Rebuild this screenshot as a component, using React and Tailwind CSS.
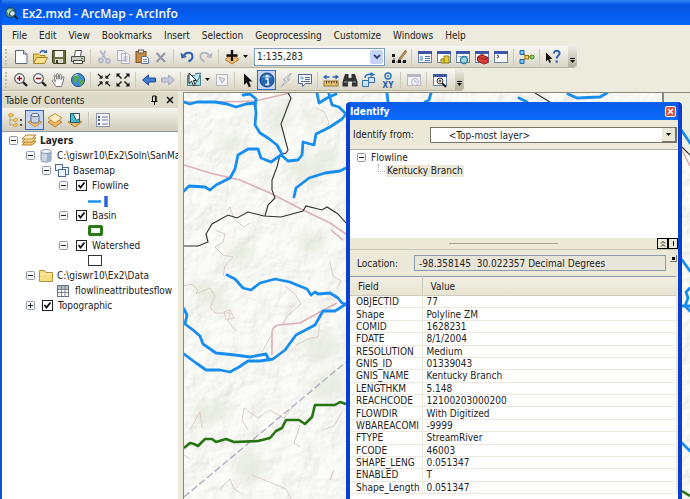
import React, { useState } from "react";

const FONT = "font-['DejaVu_Sans_Condensed','DejaVu_Sans',sans-serif]";

const menus = [
  "File",
  "Edit",
  "View",
  "Bookmarks",
  "Insert",
  "Selection",
  "Geoprocessing",
  "Customize",
  "Windows",
  "Help",
];

const attributes = [
  ["OBJECTID", "77"],
  ["Shape", "Polyline ZM"],
  ["COMID", "1628231"],
  ["FDATE", "8/1/2004"],
  ["RESOLUTION", "Medium"],
  ["GNIS_ID", "01339043"],
  ["GNIS_NAME", "Kentucky Branch"],
  ["LENGTHKM", "5.148"],
  ["REACHCODE", "12100203000200"],
  ["FLOWDIR", "With Digitized"],
  ["WBAREACOMI", "-9999"],
  ["FTYPE", "StreamRiver"],
  ["FCODE", "46003"],
  ["SHAPE_LENG", "0.051347"],
  ["ENABLED", "T"],
  ["Shape_Length", "0.051347"],
];

// small window frame shared by several toolbar icons
const Frame = ({ muted }) => (
  <>
    <rect x="1.5" y="2.5" width="13" height="11" fill={muted ? "#f1f1f6" : "#fff"} stroke={muted ? "#b5b5c6" : "#6a7fa8"} />
    <rect x="1" y="2" width="14" height="3" fill={muted ? "#b5b5c6" : "#3c55a5"} />
  </>
);

const Lens = ({ children }) => (
  <>
    <path d="M9.5 9.5l4.5 4.5" stroke="#222" strokeWidth="2.4" />
    <circle cx="6.5" cy="6.5" r="4.8" fill="#f6f8fb" stroke="#5a5a62" strokeWidth="1.2" />
    {children}
  </>
);

const icons = {
  new: (
    <>
      <path d="M2.5 1.5h8l3.500 3.500v9.500h-11.500z" fill="#fff" stroke="#5d6878" />
      <path d="M10.500 1.500v3.500h3.500" fill="#cfd6e0" stroke="#5d6878" />
    </>
  ),
  open: (
    <>
      <path d="M1.500 14v-9h5l1.500 1.500h5v3" fill="#f2cf63" stroke="#a5832a" />
      <path d="M1.500 14.500l3-6h11l-3 6z" fill="#fbe28a" stroke="#a5832a" />
      <path d="M8 4c1-2.500 3-3 5-1.500" fill="none" stroke="#2b5da8" strokeWidth="1.500" />
      <path d="M11.500 4h3.500v-3.500z" fill="#2b5da8" />
    </>
  ),
  save: (
    <>
      <path d="M1.500 1.500h13v13h-12l-1-1z" fill="#716f3c" stroke="#3f3e25" />
      <rect x="4" y="2" width="8" height="6" fill="#f3f3ec" />
      <rect x="4" y="10" width="8" height="4" fill="#d8d8cc" />
      <rect x="5" y="11" width="2" height="3" fill="#3f3e25" />
    </>
  ),
  print: (
    <>
      <path d="M4.500 7l1-5.500h6l-1 5.500" fill="#fff" stroke="#555" />
      <path d="M1.500 7.500h13v5h-13z" fill="#c9ccc0" stroke="#4b4d46" />
      <path d="M3.500 11.500h9v3h-9z" fill="#f5f5f0" stroke="#4b4d46" />
      <rect x="11" y="9" width="2" height="1" fill="#2d8f2d" />
    </>
  ),
  cut: (
    <g fill="none" stroke="#b3b7cb" strokeWidth="1.800">
      <path d="M4 1.500l6.500 9M9.500 1.500l-3 7" />
      <circle cx="5" cy="11.500" r="2" />
      <circle cx="12" cy="12" r="2" />
    </g>
  ),
  copy: (
    <g fill="#f2f2f7" stroke="#abaec4">
      <path d="M2.500 1.500h6l2 2v8h-8zM6.500 4.500h6l2 2v8h-8z" />
      <path d="M8.500 8h4M8.500 10h4M8.500 12h4" />
    </g>
  ),
  paste: (
    <>
      <rect x="2" y="2.500" width="10" height="11" fill="#c68b45" stroke="#7a5323" />
      <rect x="4.500" y="1" width="5" height="3" fill="#e8e3d0" stroke="#666" />
      <path d="M7.500 7.500h5l2 2v5h-7z" fill="#fff" stroke="#5873ab" />
      <path d="M9 10.500h4M9 12.500h4" stroke="#7b94c5" />
    </>
  ),
  del: <path d="M3.500 4l8.500 9M12 4l-8.500 9" stroke="#9295ad" strokeWidth="2" />,
  undo: (
    <>
      <path d="M5 7c1-4 8-4.500 8.500 0 .2 3-2 4.500-4 5.500" fill="none" stroke="#3264b4" strokeWidth="2" />
      <path d="M1.500 3.500l1 6 5.500-1.500z" fill="#3264b4" />
    </>
  ),
  redo: (
    <>
      <path d="M11 7c-1-4-8-4.500-8.500 0-.2 3 2 4.500 4 5.500" fill="none" stroke="#b4b8c4" strokeWidth="2" />
      <path d="M14.500 3.500l-1 6-5.500-1.500z" fill="#b4b8c4" />
    </>
  ),
  add: (
    <>
      <path d="M8 5l7 5.500-7 4.500-7-4.500z" fill="#f3bd78" stroke="#bd7733" />
      <path d="M8 1v11M2.500 6.500h11" stroke="#111" strokeWidth="2.400" />
    </>
  ),
  editor: (
    <>
      <path d="M14.500 1l-6 8-1.500 2.500 2.800-1.200 5.700-7.300z" fill="#c9985c" stroke="#7b5026" strokeWidth=".7" />
      <path d="M3 6v7h11" fill="none" stroke="#444" strokeDasharray="2 1" />
      <path d="M1 5h3v3h-3zM1 11h3v3h-3zM7 11h3v3h-3zM12 11h3v3h-3z" fill="#111" />
    </>
  ),
  toc: (
    <>
      <Frame />
      <path d="M3 7h3v5h-3z" fill="#9dbbe6" />
      <path d="M8 7.500h5M8 9.500h5M8 11.500h5" stroke="#4f79bb" />
    </>
  ),
  catalog: (
    <>
      <Frame />
      <path d="M5 14v-4h3v-3h5v7z" fill="#e5ce32" stroke="#8d7b1c" />
      <path d="M8 10v4" stroke="#8d7b1c" />
    </>
  ),
  search: (
    <>
      <Frame />
      <path d="M3 7.500h10" stroke="#9fb4c9" />
      <circle cx="9" cy="11" r="3.500" fill="#9fd8d8" stroke="#2b7da0" strokeWidth="1.400" />
    </>
  ),
  toolbox: (
    <>
      <Frame />
      <path d="M3.500 8l4-2.500 6.500 3v5l-4 1.500-6.500-3z" fill="#d8423b" stroke="#8c1e1a" />
      <path d="M3.500 8l6.500 2.500 4-2M7 7c1-2 3-1 4 1.500" fill="none" stroke="#8c1e1a" />
    </>
  ),
  python: (
    <>
      <Frame />
      <path d="M4 6l2 1.500-2 1.500" fill="none" stroke="#222" />
    </>
  ),
  model: (
    <>
      <path d="M3 3l4 5h6M3 13l4-5" fill="none" stroke="#9b8338" strokeWidth="1.300" />
      <path d="M1 1.500h4v4h-4zM1 10.500h4v4h-4z" fill="#7cc1ee" stroke="#1d6aa8" />
      <rect x="6" y="6.500" width="3.500" height="3.500" fill="#f5d05a" stroke="#a17a17" />
      <circle cx="13" cy="8" r="2" fill="#8bd06e" stroke="#3d8a28" />
    </>
  ),
  help: (
    <>
      <path d="M1 3.500v9l2-2 1.500 3.500 1.500-.7-1.500-3.300h3z" fill="#111" />
      <path d="M9 4.500c0-4 6-3.500 5.500 0-.3 2-2.800 2.500-2.800 5" fill="none" stroke="#2b63ae" strokeWidth="2" />
      <rect x="10.600" y="11.500" width="2.200" height="2.200" fill="#2b63ae" />
    </>
  ),
  zoomIn: (
    <Lens>
      <path d="M6.500 4v5M4 6.500h5" stroke="#8b1a1a" strokeWidth="1.500" />
    </Lens>
  ),
  zoomOut: (
    <Lens>
      <path d="M4 6.500h5" stroke="#8b1a1a" strokeWidth="1.500" />
    </Lens>
  ),
  pan: (
    <path
      d="M5 14.500l-3.500-5c-.8-1.300.8-2 1.700-1l1.300 1.300-1.500-5.600c-.2-1.400 1.300-1.600 1.700-.4l1.300 3.500-.4-4.600c0-1.400 1.500-1.400 1.700 0l.7 4.400.7-4c.3-1.200 1.600-1 1.600.2l-.2 4.300 1.300-2.500c.6-1 1.700-.5 1.500.5l-1.200 5.400-1.200 3.500z"
      fill="#fff"
      stroke="#77736d"
    />
  ),
  globe: (
    <>
      <circle cx="8" cy="8" r="6.500" fill="#3f8fd4" stroke="#234f86" />
      <path d="M4 4c2-2 5-1 5 1s-2 2-2 4-2 2-3 0-1.500-3.500 0-5zM10 8c2-1 3.500 0 3.500 1.500s-2 3.500-3 3.500-1.500-4-.5-5z" fill="#57a94c" />
      <path d="M4 4.500c1-1.500 3-2 4-1.500" stroke="#d5ecfb" fill="none" />
    </>
  ),
  fixedIn: (
    <g fill="#111" stroke="#111" strokeWidth="1.400">
      <path d="M2 2l4 4M14 2l-4 4M2 14l4-4M14 14l-4-4" />
      <path d="M6.500 3v3.500h-3.500zM9.500 3v3.500h3.500zM6.500 13v-3.500h-3.500zM9.500 13v-3.500h3.500z" strokeWidth="0" />
    </g>
  ),
  fixedOut: (
    <g fill="#111" stroke="#111" strokeWidth="1.400">
      <path d="M2.500 2.500l4 4M13.500 2.500l-4 4M2.500 13.500l4-4M13.500 13.500l-4-4" />
      <path d="M1.500 5.500v-4h4zM14.500 5.500v-4h-4zM1.500 10.500v4h4zM14.500 10.500v4h-4z" strokeWidth="0" />
    </g>
  ),
  back: <path d="M1.500 8l6-5v3h7v4h-7v3z" fill="#3f7fd2" stroke="#1c4f9c" />,
  forward: <path d="M14.500 8l-6-5v3h-7v4h7v3z" fill="#c3c8d8" stroke="#a6abc0" />,
  selectFeatures: (
    <>
      <path d="M1.500 3.500h13v10h-13z" fill="#9fe0dc" stroke="#4c7f87" />
      <path d="M9 2l5.500-1-1.500 5-4 6" fill="#bde8f4" stroke="#3b7284" />
      <path d="M3 1v10.500l2.500-2.300 2 4.500 1.800-.8-2-4.400h3.200z" fill="#fff" stroke="#222" />
    </>
  ),
  clear: (
    <>
      <rect x="2.500" y="2.500" width="11" height="11" fill="#f3f3f3" stroke="#b5b7c0" />
      <path d="M5 5l6 2-3 4z" fill="#ddd" stroke="#b5b7c0" />
    </>
  ),
  arrow: <path d="M4 1.500v11.500l2.700-2.600 2.200 4.800 2.100-1-2.200-4.600h3.700z" fill="#111" />,
  identify: (
    <>
      <circle cx="8" cy="8" r="7" fill="#2467b7" stroke="#173f7d" />
      <path d="M3 5c2-3.500 8-3.500 10 0-3 2-7 2-10 0z" fill="#5b9be0" />
      <circle cx="8.200" cy="4.200" r="1.300" fill="#fff" />
      <path d="M6.500 7h2.500v5.500M6.300 12.500h4" fill="none" stroke="#fff" strokeWidth="1.400" />
    </>
  ),
  hyperlink: <path d="M12.500 1.500l-7.500 6.500h3l-4.500 6.500 8.500-7.500h-3l4.500-5.500z" fill="#ececf0" stroke="#b0b0bb" />,
  popup: (
    <>
      <path d="M1.500 2.500h13v9h-6l-3 3v-3h-4z" fill="#fff" stroke="#4d6788" />
      <path d="M3.500 4.500h3v3h-3z" fill="#8fb4de" />
      <path d="M8 5.500h5M8 7.500h5M4 9.500h9" stroke="#466da6" />
    </>
  ),
  measure: (
    <>
      <rect x="1" y="9" width="14" height="5" fill="#e6bd73" stroke="#9d7636" />
      <path d="M3.500 9v2.500M6 9v2M8.500 9v2.500M11 9v2M13.500 9v2.500" stroke="#5b431c" />
      <path d="M0 5l3.500-2.500v1.700h3v1.600h-3v1.700zM16 5l-3.500-2.500v1.700h-3v1.600h3v1.700z" fill="#2d62ae" />
    </>
  ),
  find: (
    <>
      <path d="M3 2h3.500v4h3v-4h3.500l2.500 8v4.500h-5.500v-5h-4v5h-5.500v-4.500z" fill="#333" />
      <path d="M2 10h3.500M10.500 10h3.500" stroke="#aaa" />
    </>
  ),
  route: (
    <>
      <path d="M1.500 8.500h6v6h-6zM7.500 5.500h6v5h-6z" fill="#cfe3f5" stroke="#3571ab" />
      <path d="M4 6c0-3 3-4 6-3.500" fill="none" stroke="#2672ba" strokeWidth="1.500" />
      <path d="M9.500 0l4.500 2.500-4.500 2.500z" fill="#2672ba" />
    </>
  ),
  xy: (
    <>
      <circle cx="8" cy="4" r="3" fill="none" stroke="#2370b8" strokeWidth="1.400" />
      <circle cx="8" cy="4" r="1" fill="#2370b8" />
      <text x="8" y="15.500" textAnchor="middle" fontSize="8" fontWeight="bold" fill="#1c5da2" fontFamily="DejaVu Sans Condensed, sans-serif">
        XY
      </text>
    </>
  ),
  time: (
    <>
      <Frame muted />
      <circle cx="9" cy="10" r="3.500" fill="#f3f3f6" stroke="#b5b5c6" />
      <path d="M9 8v2h2" fill="none" stroke="#b5b5c6" />
    </>
  ),
  viewer: (
    <>
      <Frame />
      <path d="M10 11l4 4" stroke="#222" strokeWidth="2" />
      <circle cx="8" cy="9" r="3" fill="#fff" stroke="#333" />
      <path d="M8 7.500v3M6.500 9h3" stroke="#333" />
    </>
  ),
  tocOrder: (
    <>
      <path d="M3 4v9h5M3 8h5" fill="none" stroke="#b6a36b" />
      <path d="M1 3l3-2 3 2-3 2zM6 8l3-2 2 2-3 2zM6 13l3-2 2 2-3 2z" fill="#f6c95c" stroke="#c08c2c" strokeWidth=".7" />
      <path d="M13 7h2v2h-2zM13 12h2v2h-2z" fill="#555" />
    </>
  ),
  tocSource: (
    <>
      <path d="M1 10l7-3 7 3-7 5z" fill="#f5c878" stroke="#c68d3d" />
      <path d="M4 3v7c1 1.500 7 1.500 8 0v-7" fill="#c7d3e4" stroke="#5b6d88" />
      <ellipse cx="8" cy="3" rx="4" ry="1.600" fill="#f1f5fa" stroke="#5b6d88" />
    </>
  ),
  tocVisible: (
    <>
      <path d="M1 10l7-4 7 4-7 5z" fill="#f0b961" stroke="#ba7d2e" />
      <path d="M1 6l7-4.500 7 4.500-7 5z" fill="#fdebc4" stroke="#c68d3d" />
    </>
  ),
  tocSelection: (
    <>
      <path d="M1 10l7-4 7 4-7 5z" fill="#f0b961" stroke="#ba7d2e" />
      <path d="M3.500 1.500h9v9h-9z" fill="#3cc1d4" stroke="#245a68" />
      <path d="M6 1.500h6.500v5l-3 2z" fill="#fff" stroke="#245a68" />
    </>
  ),
  tocOptions: (
    <>
      <rect x="1.500" y="1.500" width="13" height="13" fill="#f6f7fb" stroke="#8b93ac" />
      <path d="M3 4h2v2h-2zM3 7h2v2h-2zM3 11h2v2h-2z" fill="#4e62a5" />
      <path d="M7 5h6M7 8h6M7 12h6" stroke="#6f7a9c" />
    </>
  ),
  layers: (
    <>
      <path d="M1 12l4-4h10l-4 4z" fill="#f5c365" stroke="#b98130" />
      <path d="M1 9l4-4h10l-4 4z" fill="#fbdc9b" stroke="#b98130" />
      <path d="M1 6l4-4h10l-4 4z" fill="#fdedc8" stroke="#b98130" />
    </>
  ),
  database: (
    <>
      <path d="M3 3.500v9c1 2 9 2 10 0v-9" fill="#c9d6e6" stroke="#8193ab" />
      <path d="M9 5v9c2 0 4-.5 4-1.500v-8z" fill="#9fb2ca" />
      <ellipse cx="8" cy="3.500" rx="5" ry="2" fill="#f2f6fb" stroke="#8193ab" />
    </>
  ),
  basemap: (
    <g fill="#eef4fb" stroke="#4a6d96">
      <rect x="1.500" y="1.500" width="7" height="6" />
      <rect x="8.500" y="4.500" width="6" height="7" />
      <rect x="4.500" y="6.500" width="7" height="7" />
    </g>
  ),
  folder: (
    <>
      <path d="M1.500 13.500v-11h5l1.500 2h6.500v9z" fill="#f6dc80" stroke="#b3923b" />
      <path d="M2 6h12" stroke="#fdf3c4" />
    </>
  ),
  table: (
    <>
      <rect x="2.500" y="2.500" width="11" height="11" fill="#fff" stroke="#67707f" />
      <rect x="3" y="3" width="10" height="3" fill="#b4bccb" />
      <path d="M3 6.500h10M3 9.500h10M6.500 3v10M10 3v10" stroke="#7b8493" />
    </>
  ),
};

const Icon = ({ name, className = "size-4" }) => (
  <svg viewBox="0 0 16 16" className={`shrink-0 ${className}`} aria-hidden="true">
    {icons[name]}
  </svg>
);

const Caret = () => (
  <svg viewBox="0 0 5 3" className="h-[3px] w-[5px] shrink-0" aria-hidden="true">
    <path d="M0 0h5l-2.500 3z" fill="#111" />
  </svg>
);

const ToolButton = ({ icon, caret, active }) => (
  <button
    aria-label={icon}
    className={`flex h-5 shrink-0 items-center justify-center gap-[3px] ${caret ? "w-7" : "w-[19px]"} ${
      active ? "border border-[#316ac5] bg-[#c7d6ee]" : ""
    }`}
  >
    <Icon name={icon} />
    {caret && <Caret />}
  </button>
);

const Separator = () => (
  <div className="mx-[3px] h-4 w-px shrink-0 bg-[#cbc8b7]" />
);

const Grip = () => (
  <div className="mr-1 ml-[3px] h-4 w-0.5 shrink-0 border-l-2 border-dotted border-[#c3c0ae]" />
);

const Overflow = () => (
  <button
    aria-label="Toolbar options"
    className="ml-1.5 flex h-full w-[9px] shrink-0 flex-col items-center justify-end gap-px rounded-r-sm bg-linear-to-b from-[#eeece1] to-[#b4b19d] pb-1"
  >
    <span className="h-px w-[5px] bg-black" />
    <Caret />
  </button>
);

const Toolbar = ({ label, children }) => (
  <div
    role="toolbar"
    aria-label={label}
    className="flex h-[22px] w-fit items-center rounded-r-sm border-b border-[#b9b6a2] bg-linear-to-b from-[#f8f7f1] to-[#d9d6c6]"
  >
    <Grip />
    {children}
    <Overflow />
  </div>
);

const Expander = ({ open, onClick }) => (
  <button aria-label={open ? "Collapse" : "Expand"} onClick={onClick} className="shrink-0">
    <svg viewBox="0 0 9 9" className="size-[9px]" aria-hidden="true">
      <rect x=".5" y=".5" width="8" height="8" rx="1" fill="#f7f7f5" stroke="#8e9aab" />
      <path d={open ? "M2 4.500h5" : "M2 4.500h5M4.500 2v5"} stroke="#222" />
    </svg>
  </button>
);

const CheckLayer = ({ name }) => {
  const [checked, setChecked] = useState(true);
  return (
    <label className="flex items-center gap-[5px]">
      <span className="grid size-[11px] place-items-center">
        <input
          type="checkbox"
          checked={checked}
          onChange={() => setChecked(!checked)}
          className="peer col-start-1 row-start-1 size-[11px] appearance-none border border-[#222] bg-white"
        />
        <svg viewBox="0 0 9 9" className="pointer-events-none invisible col-start-1 row-start-1 size-[9px] peer-checked:visible" aria-hidden="true">
          <path d="M1.500 4l2 2.500 4-5" fill="none" stroke="#111" strokeWidth="1.800" />
        </svg>
      </span>
      {name}
    </label>
  );
};

const Row = ({ className, children }) => (
  <li className={`flex h-[15px] items-center whitespace-nowrap ${className}`}>{children}</li>
);

const Contents = () => {
  const [showTopo, setShowTopo] = useState(false);
  return (
    <aside className="flex w-[181px] shrink-0 flex-col bg-[#ece9d8] pr-[5px]">
      <header className="flex h-4 items-center bg-[#dddac7] pr-1 pl-[3px]">
        <h2 className="flex-1">Table Of Contents</h2>
        <button aria-label="Auto hide" className="mr-2">
          <svg viewBox="0 0 8 10" className="h-2.5 w-2" aria-hidden="true">
            <path d="M2.500 6v-5h3.500v5M1 6.500h6.500M4.500 7v3" fill="none" stroke="#111" />
            <path d="M5 1h1.500v5h-1.500z" fill="#111" />
          </svg>
        </button>
        <button aria-label="Close">
          <svg viewBox="0 0 8 8" className="size-2" aria-hidden="true">
            <path d="M1 1l6 6M7 1l-6 6" stroke="#111" strokeWidth="1.500" />
          </svg>
        </button>
      </header>
      <div className="flex h-[23px] items-center gap-px bg-linear-to-b from-[#f6f5ee] to-[#cfccbb] pl-[3px]">
        <ToolButton icon="tocOrder" />
        <ToolButton icon="tocSource" active />
        <ToolButton icon="tocVisible" />
        <ToolButton icon="tocSelection" />
        <Separator />
        <ToolButton icon="tocOptions" />
      </div>
      <ul className="flex-1 overflow-hidden border-t border-[#8f9aa8] bg-white pt-px">
        <Row className="gap-[3px] pl-[7px]">
          <Expander open />
          <Icon name="layers" />
          <strong>Layers</strong>
        </Row>
        <Row className="gap-[3px] pl-6">
          <Expander open />
          <Icon name="database" />
          C:\giswr10\Ex2\Soln\SanMa
        </Row>
        <Row className="gap-[3px] pl-10">
          <Expander open />
          <Icon name="basemap" />
          Basemap
        </Row>
        <Row className="gap-2 pl-[57px]">
          <Expander open />
          <CheckLayer name="Flowline" />
        </Row>
        <Row className="pl-[86px]">
          <svg viewBox="0 0 20 12" className="h-3 w-5" aria-hidden="true">
            <path d="M0 6.500h13" stroke="#1e90ef" strokeWidth="2.500" />
            <path d="M18 1v11" stroke="#2f62dc" strokeWidth="3.500" />
          </svg>
        </Row>
        <Row className="gap-2 pl-[57px]">
          <Expander open />
          <CheckLayer name="Basin" />
        </Row>
        <Row className="pl-[86px]">
          <div className="h-[11px] w-[15px] rounded-xs border-3 border-[#2a7a12]" />
        </Row>
        <Row className="gap-2 pl-[57px]">
          <Expander open />
          <CheckLayer name="Watershed" />
        </Row>
        <Row className="pl-[86px]">
          <div className="h-[11px] w-[14px] border border-[#333]" />
        </Row>
        <Row className="gap-[3px] pl-6">
          <Expander open />
          <Icon name="folder" />
          C:\giswr10\Ex2\Data
        </Row>
        <Row className="gap-1 pl-[53px]">
          <Icon name="table" />
          flowlineattributesflow
        </Row>
        <Row className="gap-[7px] pl-6">
          <Expander open={showTopo} onClick={() => setShowTopo(!showTopo)} />
          <CheckLayer name="Topographic" />
        </Row>
      </ul>
    </aside>
  );
};

const MapView = () => (
  <svg viewBox="184 93 506 406" preserveAspectRatio="xMinYMin slice" className="size-full" role="img" aria-label="Map">
    <defs>
      <filter id="relief" x="0" y="0" width="100%" height="100%">
        <feTurbulence type="fractalNoise" baseFrequency="0.045" numOctaves="4" seed="11" />
        <feDiffuseLighting surfaceScale="2.600" diffuseConstant="1.080" lightingColor="#fdfdf9">
          <feDistantLight azimuth="225" elevation="62" />
        </feDiffuseLighting>
      </filter>
      <filter id="soft">
        <feGaussianBlur stdDeviation="5" />
      </filter>
    </defs>
    <rect x="184" y="93" width="506" height="406" fill="#f8f8f4" />
    <rect x="184" y="93" width="506" height="406" filter="url(#relief)" opacity=".55" />
    <rect x="663" y="93" width="27" height="60" fill="#e6ecdc" opacity=".7" />
    <g fill="#dfe5d4" opacity=".6" filter="url(#soft)">
      <path d="M270 112l12-14 6 20-6 20-14-6zM285 165l30-8 15-12 10 20-40 18zM215 140l18-6 12 12-18 8zM300 105l20 10-8 18z" />
      <path d="M225 250l20-10 10 15-20 12zM300 230l25 8-6 16-20-6zM190 280l25 6 20 30-30-8zM300 340l30-10 14 20-30 14z" />
      <path d="M190 410l30-12 12 15-30 14zM230 460l25-10 14 20-24 15zM310 380l30-14 6 25-30 10z" />
    </g>
    <g fill="none" stroke="#dccfc6">
      <path d="M316 108l8 4 5 10-3 8M226 212l4-5 4 12 10 8 6-4M215 230l10 4-2 8-8 5 8 8 10 2-8 9-2 10M184 286l8-2 6 6-2 4 14-6 5 8-5 12 6 5 14 0-2 8 8 10M224 312l6-2 4 8-8 2z" />
      <path d="M330 262l3 14 8 5-4 8M285 286l10 8 6 10-14 12-4 8M262 352l10-18M296 345l12-6 10-2 2-14" />
      <path d="M190 430l10-18 2 16M248 430l-6-10 2-12 14 10 12-8 14 8 8-10M300 425l-6 18 6 4M322 430l12-4 8-14M184 455l6 4M220 489l10-10 4 10 10 6M252 475l20 8 14 6 5 10M330 480l4-10-4 10" />
    </g>
    <g fill="none" stroke="#dcb0b3" strokeWidth="1.600">
      <path d="M184 165l26 8 30 7 30 13 33 17 27 13 16 11M184 102q40 0 71-1l35-8M337 303l-17 9-20 11-22 2q-6 2-6 8v22M331 230l12 10" />
      <path d="M682 150l8 16" />
    </g>
    <path d="M184 497l162-135" fill="none" stroke="#b9b0c6" strokeWidth="1.500" strokeDasharray="7 3" />
    <g fill="none" stroke="#2f2f2f" strokeWidth="1.100">
      <path d="M288 93l3 5-10 26 7 26-2 3-6 2-3 12-5 13v10l3 8-7 7-3 11" />
      <path d="M184 246l14 0 10-4-2-8 6-10 16-9 9 3 11-6 16 4 17 1 22-6 3-5 16 4 5-3 11 7 8 9" />
      <path d="M535 93l15 9M663 93v9M682 147l8 8" />
    </g>
    <g fill="none" stroke="#178df0" strokeWidth="2.800" strokeLinejoin="round" strokeLinecap="round">
      <path d="M184 102l6 2 7-2h18l12 2 9 3 10-3 9-1 1 10-1 12 5 8 8 5 9 7 5 9" />
      <path d="M243 95l7-1 6 5-1 7" />
      <path d="M184 191l5-5 16 1 5 3 6-5 14-7 5-9 3-14 10-6 10 0 3 9 10 4 10-7 7 6 10-1 4-5 1-13 11 3 2-11 14-7 12-8 4-5-7-7-7-2-3-11M317 93l2 10 8-5 9-4" />
      <path d="M294 197l2-9 13-10 16-5 15-2 6-3" />
      <path d="M227 275l8 4 8 9 8 2 9-7 15-4 15 3 7 3 10 4 4 6 4-3 3 2 12-1 8 5 4 5 7 2" />
      <path d="M346 304l-11 7h-12l-8 14-19 10-11 15-12 9-13 2h-12l-9 6-9 5-10-2-14 0-10-7-12-9" />
      <path d="M184 309l3 6-2 9 8 6 7 6 3 8 13 9 19 2 15 2 16-3 3 6" />
      <path d="M387 93l1 9M431 93l-2 7-4 2M519 98l8 4M568 94l9 4 23-1 7-4" />
      <path d="M682 131l8 12M682 260l8 11M690 288l-4 4 2 6-3 8 5 5M682 306h8M682 443l8 8" />
    </g>
    <g fill="none" stroke="#277512" strokeWidth="2.600" strokeLinejoin="round">
      <path d="M184 448l6-5 4 1 4 2 7-7 7 0 4 3 10-3 8 3 24-1 12-3 6-7 6-3 4-8 13 0 6 4 7-7 3-12 20 0 5-3 6 2M682 491l8 5" />
    </g>
  </svg>
);

const Identify = () => (
  <section
    aria-label="Identify"
    className="absolute top-[9px] bottom-0 left-[162px] flex w-[336px] flex-col overflow-hidden rounded-t-sm border-x-4 border-[#0a3fd4] bg-[#ece9d8]"
  >
    <header className="flex h-[18px] shrink-0 items-center justify-between bg-linear-to-b from-[#0a5be8] to-[#0a6cfb] text-white">
      <h2 className="font-bold">Identify</h2>
      <button aria-label="Close" className="mr-0.5 rounded-xs border border-white bg-[#dd4f35] p-px">
        <svg viewBox="0 0 7 7" className="size-[7px]" aria-hidden="true">
          <path d="M1 1l5 5M6 1l-5 5" stroke="#fff" strokeWidth="1.500" />
        </svg>
      </button>
    </header>
    <div className="flex h-[30px] shrink-0 items-center gap-4 border-b border-[#b5b2a0] pr-px pl-[3px]">
      <label htmlFor="layer">Identify from:</label>
      <div className="relative h-4 flex-1">
        <select id="layer" className="block h-4 w-full appearance-none border border-[#77756a] bg-white pl-[18px]">
          <option>&lt;Top-most layer&gt;</option>
        </select>
        <span className="pointer-events-none absolute top-px right-px flex h-3.5 w-3.5 items-center justify-center border-r border-b border-[#77756a] bg-[#ece9d8]">
          <Caret />
        </span>
      </div>
    </div>
    <ul className="h-[88px] shrink-0 bg-white">
      <li>
        <div className="flex h-3.5 items-center gap-[5px] pl-[7px]">
          <Expander open />
          Flowline
        </div>
        <ul>
          <li className="flex h-3.5 items-center pl-7">
            <span className="mr-px h-2 w-[7px] self-start border-b border-l border-dotted border-[#aaa]" />
            <span className="bg-[#ece9d8] px-px leading-3">Kentucky Branch</span>
          </li>
        </ul>
      </li>
    </ul>
    <div className="flex h-3 shrink-0 items-center border-b border-[#c9c6b5]">
      <div className="flex flex-1 justify-center">
        <div className="h-px w-[109px] bg-[#a3a193]" />
      </div>
      <button aria-label="Collapse pane" className="flex h-[11px] w-[11px] items-center justify-center border border-black">
        <svg viewBox="0 0 6 7" className="h-[7px] w-1.5" aria-hidden="true">
          <path d="M1 3.500l2-2 2 2M1 6.500l2-2 2 2" fill="none" stroke="#111" />
        </svg>
      </button>
      <button aria-label="Split pane" className="flex h-[11px] w-2.5 items-center justify-center border border-black">
        <span className="h-[5px] w-px bg-black" />
      </button>
    </div>
    <div className="flex h-[26px] shrink-0 items-center gap-4 pr-px pl-[7px]">
      <label htmlFor="location">Location:</label>
      <div className="flex flex-1 gap-1">
        <input
          id="location"
          readOnly
          value={"-98.358145  30.022357 Decimal Degrees"}
          className="h-4 min-w-0 flex-1 border border-[#8a9cae] bg-[#e8e6d8] px-1"
        />
        <button aria-label="Units" className="flex size-[7px] items-center justify-center border-r border-b border-[#77756a]">
          <span className="size-[3px] bg-black" />
        </button>
      </div>
    </div>
    <table className="mr-px h-[218px] w-[326px] shrink-0 table-fixed border-collapse border-t border-[#8a9cae] bg-white leading-[11px]">
      <thead>
        <tr className="h-[19px] bg-linear-to-b from-[#f1efe3] to-[#e6e3d2] text-left">
          <th className="w-[72px] border-r border-b border-[#cfccbc] pl-2 font-normal">Field</th>
          <th className="border-b border-[#cfccbc] pl-2 font-normal">Value</th>
        </tr>
      </thead>
      <tbody>
        {attributes.map(([field, value]) => (
          <tr key={field}>
            <td className="border-r border-b border-[#ece9dc] pl-1.5 whitespace-nowrap">{field}</td>
            <td className="border-b border-[#ece9dc] pl-1">{value}</td>
          </tr>
        ))}
      </tbody>
    </table>
    <div className="flex-1 bg-white" />
  </section>
);

export default function App() {
  return (
    <div className={`flex h-screen flex-col overflow-hidden border-l-2 border-[#0a55e0] bg-[#edeade] text-[10px] text-[#222] ${FONT}`}>
      <header className="flex h-[25px] shrink-0 items-center gap-1 bg-linear-to-b from-[#2f83f7] via-[#0553e0] via-20% to-[#0566fb] pt-0.5 pl-[3px] text-white">
        <svg viewBox="0 0 14 14" className="size-[13px]" aria-hidden="true">
          <circle cx="6" cy="6" r="5.500" fill="#3b8b83" stroke="#1b3f69" />
          <path d="M2 4c2-2 4-2 6-1l-1 3-3 2z" fill="#a8dcb0" />
          <circle cx="8" cy="7" r="3" fill="#cfe9f2" stroke="#2a3c55" />
          <path d="M10 9l3.500 4" stroke="#222" strokeWidth="2" />
        </svg>
        <h1 className="font-['Open_Sans',sans-serif] text-xs font-semibold">Ex2.mxd - ArcMap - ArcInfo</h1>
      </header>
      <nav className="flex h-[21px] shrink-0 items-center gap-3 pl-2.5">
        {menus.map((menu) => (
          <button key={menu}>{menu}</button>
        ))}
      </nav>
      <div className="flex shrink-0 flex-col gap-px pb-px">
        <Toolbar label="Standard">
          <ToolButton icon="new" />
          <ToolButton icon="open" />
          <ToolButton icon="save" />
          <ToolButton icon="print" />
          <Separator />
          <ToolButton icon="cut" />
          <ToolButton icon="copy" />
          <ToolButton icon="paste" />
          <ToolButton icon="del" />
          <Separator />
          <ToolButton icon="undo" />
          <ToolButton icon="redo" />
          <Separator />
          <ToolButton icon="add" caret />
          <div className="relative mx-1">
            <select aria-label="Map scale" className="block h-[18px] w-[131px] appearance-none border border-[#7f9db9] bg-white pl-0.5">
              <option>1:135,283</option>
            </select>
            <span className="pointer-events-none absolute top-0.5 right-0.5 flex h-3.5 w-[13px] items-center justify-center rounded-xs bg-[#c6d4f8]">
              <svg viewBox="0 0 8 6" className="h-1.5 w-2" aria-hidden="true">
                <path d="M1 1l3 3 3-3" fill="none" stroke="#31446f" strokeWidth="1.800" />
              </svg>
            </span>
          </div>
          <ToolButton icon="editor" />
          <Separator />
          <ToolButton icon="toc" />
          <ToolButton icon="catalog" />
          <ToolButton icon="search" />
          <ToolButton icon="toolbox" />
          <ToolButton icon="python" />
          <Separator />
          <ToolButton icon="model" />
          <Separator />
          <ToolButton icon="help" />
        </Toolbar>
        <Toolbar label="Tools">
          <ToolButton icon="zoomIn" />
          <ToolButton icon="zoomOut" />
          <ToolButton icon="pan" />
          <ToolButton icon="globe" />
          <Separator />
          <ToolButton icon="fixedIn" />
          <ToolButton icon="fixedOut" />
          <Separator />
          <ToolButton icon="back" />
          <ToolButton icon="forward" />
          <Separator />
          <ToolButton icon="selectFeatures" caret />
          <ToolButton icon="clear" />
          <Separator />
          <ToolButton icon="arrow" />
          <ToolButton icon="identify" active />
          <ToolButton icon="hyperlink" />
          <ToolButton icon="popup" />
          <Separator />
          <ToolButton icon="measure" />
          <ToolButton icon="find" />
          <ToolButton icon="route" />
          <ToolButton icon="xy" />
          <Separator />
          <ToolButton icon="time" />
          <Separator />
          <ToolButton icon="viewer" />
        </Toolbar>
      </div>
      <main className="flex min-h-0 flex-1">
        <Contents />
        <div className="relative min-w-0 flex-1 overflow-hidden border-t border-l border-[#8a8778]">
          <MapView />
          <Identify />
        </div>
      </main>
    </div>
  );
}
